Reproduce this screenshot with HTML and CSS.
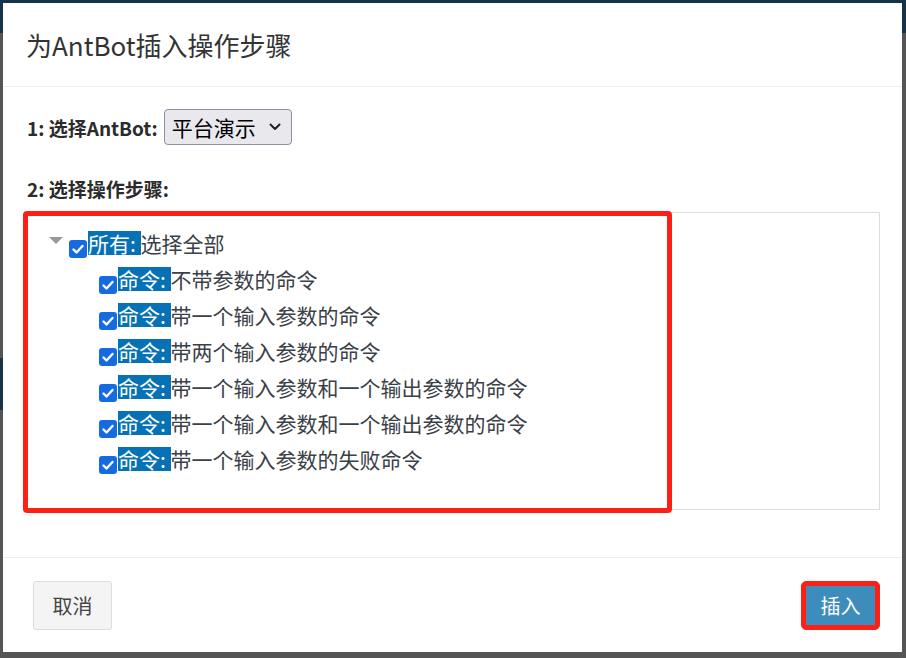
FILE: index.html
```html
<!DOCTYPE html>
<html lang="zh-CN">
<head>
  <meta charset="UTF-8">
  <title>为AntBot插入操作步骤</title>
  <link rel="stylesheet" href="styles.css">
</head>
<body>
  <!-- page behind the dialog -->
  <div class="topbar"></div>
  <div class="side-band"></div>

  <div class="modal">
    <div class="modal-header">
      <h3 class="modal-title">为AntBot插入操作步骤</h3>
    </div>

    <div class="modal-body">
      <div class="field">
        <label class="field-label">1: 选择AntBot:</label>
        <div class="select">
          <span>平台演示</span>
          <svg class="chevron" width="12" height="8" viewBox="0 0 12 8">
            <path d="M1.5 1.5 L6 6 L10.5 1.5" fill="none" stroke="#222" stroke-width="2" stroke-linecap="round" stroke-linejoin="round"/>
          </svg>
        </div>
      </div>

      <div class="field-label steps-label">2: 选择操作步骤:</div>

      <div class="tree-panel">
        <ul class="tree">
          <li>
            <div class="node">
              <span class="toggle"></span>
              <span class="check"><svg width="18" height="18" viewBox="0 0 18 18"><path d="M4.5 9.5 L7.5 12.5 L13.5 6" fill="none" stroke="#fff" stroke-width="2.4" stroke-linecap="round" stroke-linejoin="round"/></svg></span>
              <span class="tag">所有: </span><span class="text">选择全部</span>
            </div>
            <ul class="children">
              <li class="node">
                <span class="check"><svg width="18" height="18" viewBox="0 0 18 18"><path d="M4.5 9.5 L7.5 12.5 L13.5 6" fill="none" stroke="#fff" stroke-width="2.4" stroke-linecap="round" stroke-linejoin="round"/></svg></span>
                <span class="tag">命令: </span><span class="text">不带参数的命令</span>
              </li>
              <li class="node">
                <span class="check"><svg width="18" height="18" viewBox="0 0 18 18"><path d="M4.5 9.5 L7.5 12.5 L13.5 6" fill="none" stroke="#fff" stroke-width="2.4" stroke-linecap="round" stroke-linejoin="round"/></svg></span>
                <span class="tag">命令: </span><span class="text">带一个输入参数的命令</span>
              </li>
              <li class="node">
                <span class="check"><svg width="18" height="18" viewBox="0 0 18 18"><path d="M4.5 9.5 L7.5 12.5 L13.5 6" fill="none" stroke="#fff" stroke-width="2.4" stroke-linecap="round" stroke-linejoin="round"/></svg></span>
                <span class="tag">命令: </span><span class="text">带两个输入参数的命令</span>
              </li>
              <li class="node">
                <span class="check"><svg width="18" height="18" viewBox="0 0 18 18"><path d="M4.5 9.5 L7.5 12.5 L13.5 6" fill="none" stroke="#fff" stroke-width="2.4" stroke-linecap="round" stroke-linejoin="round"/></svg></span>
                <span class="tag">命令: </span><span class="text">带一个输入参数和一个输出参数的命令</span>
              </li>
              <li class="node">
                <span class="check"><svg width="18" height="18" viewBox="0 0 18 18"><path d="M4.5 9.5 L7.5 12.5 L13.5 6" fill="none" stroke="#fff" stroke-width="2.4" stroke-linecap="round" stroke-linejoin="round"/></svg></span>
                <span class="tag">命令: </span><span class="text">带一个输入参数和一个输出参数的命令</span>
              </li>
              <li class="node">
                <span class="check"><svg width="18" height="18" viewBox="0 0 18 18"><path d="M4.5 9.5 L7.5 12.5 L13.5 6" fill="none" stroke="#fff" stroke-width="2.4" stroke-linecap="round" stroke-linejoin="round"/></svg></span>
                <span class="tag">命令: </span><span class="text">带一个输入参数的失败命令</span>
              </li>
            </ul>
          </li>
        </ul>
        <!-- red annotation box -->
        <div class="mark mark-tree"></div>
      </div>
    </div>

    <div class="modal-footer">
      <button class="btn btn-default">取消</button>
      <button class="btn btn-primary marked">插入</button>
    </div>
  </div>
</body>
</html>
```

FILE: styles.css
```css
body {
  margin: 0;
  height: 100vh;
  background-color: #555;
  font-family: "Noto Sans CJK SC", "Noto Sans", sans-serif;
  color: #333;
  overflow: hidden;
}

.topbar {
  height: 33px;
  background-color: #173347;
}

.side-band {
  margin-top: 325px;
  width: 10px;
  height: 52px;
  background-color: #173347;
}

.modal {
  position: fixed;
  top: 3px;
  left: 3px;
  width: 899px;
  height: 649px;
  background: #fff;
  display: flex;
  flex-direction: column;
}

.modal-header {
  padding: 24px 23px 23px;
  border-bottom: 1px solid #eee;
}

.modal-title {
  margin: 0;
  font-size: 26px;
  font-weight: normal;
  line-height: 36px;
  color: #333;
}

.modal-body {
  flex: 1;
  padding: 22px 22px 0 23px;
  border-bottom: 1px solid #eee;
}

.field {
  display: flex;
  align-items: center;
  gap: 6px;
}

.field-label {
  font-size: 19px;
  font-weight: bold;
  color: #2b2b2b;
  padding-left: 1px;
}

.select {
  display: flex;
  align-items: center;
  gap: 13px;
  height: 34px;
  padding: 0 10px 0 7px;
  border: 1px solid #8f8f9d;
  border-radius: 4px;
  background: #e9e9ed;
  font-size: 21px;
  color: #000;
}

.steps-label {
  margin-top: 30px;
  line-height: 28px;
}

.tree-panel {
  position: relative;
  box-sizing: border-box;
  margin-top: 9px;
  height: 298px;
  border: 1px solid #ddd;
  padding: 18px 22px 0;
}

.tree, .children {
  list-style: none;
  margin: 0;
  padding: 0;
}

.children {
  padding-left: 50px;
}

.node {
  display: flex;
  align-items: flex-start;
  height: 36px;
  font-size: 21px;
}

.toggle {
  width: 0;
  height: 0;
  margin: 6px 6px 0 0;
  border-left: 7px solid transparent;
  border-right: 7px solid transparent;
  border-top: 7px solid #999;
}

.check {
  width: 18px;
  height: 18px;
  margin: 9px 1px 0 0;
  border-radius: 3px;
  background: #166be0;
}

.check svg {
  display: block;
}

.tag {
  height: 24px;
  line-height: 24px;
  background: #0672b5;
  color: #fff;
  white-space: pre;
}

.text {
  line-height: 24px;
  color: #3b3f48;
}

.mark {
  position: absolute;
  border: 5px solid #ff2015;
  border-radius: 4px;
  pointer-events: none;
}

.mark-tree {
  top: -2px;
  left: -4px;
  width: 639px;
  height: 292px;
}

.modal-footer {
  height: 94px;
  padding: 0 22px 0 30px;
  display: flex;
  align-items: center;
  justify-content: space-between;
}

.btn {
  width: 79px;
  height: 49px;
  border-radius: 3px;
  font-family: inherit;
  font-size: 20px;
  cursor: pointer;
}

.btn-default {
  background: #f4f4f4;
  border: 1px solid #ddd;
  color: #444;
}

.btn-primary {
  background: #3c8dbc;
  border: 1px solid #367fa9;
  color: #fff;
}

.marked {
  position: relative;
  box-shadow: inset 0 0 0 4px #ff2015;
  border: 1px solid #ff2015;
  border-radius: 5px;
}
```
